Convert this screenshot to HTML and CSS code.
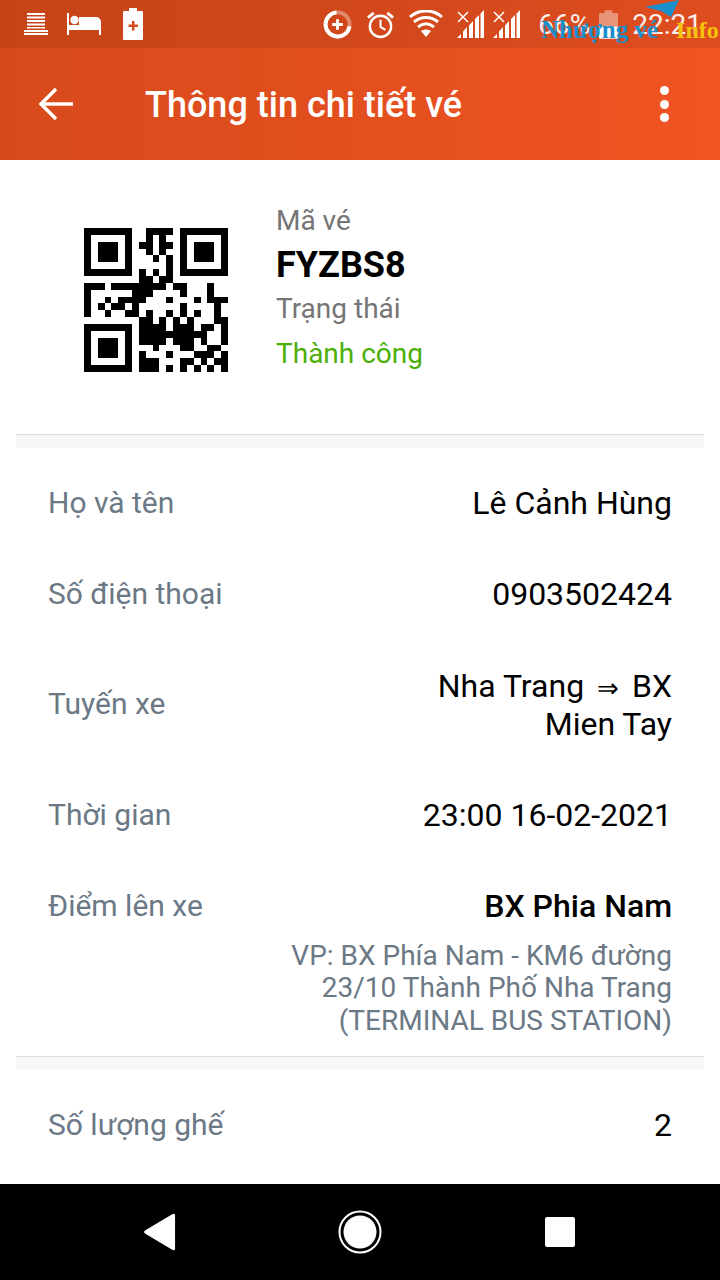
FILE: index.html
```html
<!DOCTYPE html>
<html>
<head>
<title>Thông tin chi tiết vé</title>
<meta charset="utf-8">
<link rel="stylesheet" href="styles.css">
</head>
<body>

<div class="screen">

  <div class="appbar">
    <div class="statusbar">
      <div class="status-left">
        <svg width="24" height="22" viewBox="0 0 24 22" fill="#fff"><path d="M3 0h18v2H3zM3 3.500h18v2H3zM3 7h18v2H3zM3 10.500h18v2H3zM3 14h18v1.500H3zM0 17h24v2H0zM0 20h24v2H0z"/></svg>
        <svg width="34" height="22" viewBox="0 0 34 22" fill="#fff"><path d="M0 0h2v12h10V4h17a5 5 0 0 1 5 5v13h-2v-5H2v5H0z"/><circle cx="7.500" cy="7" r="4.200"/></svg>
        <svg class="batt-plus" width="20" height="32" viewBox="0 0 20 32"><path fill="#fff" d="M6 0h8v3h5a1 1 0 0 1 1 1v27a1 1 0 0 1-1 1H1a1 1 0 0 1-1-1V4a1 1 0 0 1 1-1h5z"/><path fill="#d84b1c" d="M9 13h2.500v3.500H15V19h-3.500v3.500H9V19H5.500v-2.500H9z"/></svg>
      </div>
      <div class="status-right">
        <svg width="29" height="29" viewBox="0 0 30 30" fill="none"><circle cx="15" cy="15" r="12.500" stroke="#fff" stroke-opacity=".35" stroke-width="4"/><path d="M27.500 17A12.500 12.500 0 1 1 14 2.500" stroke="#fff" stroke-width="4"/><path d="M13.500 9.500h3v4h4v3h-4v4h-3v-4h-4v-3h4z" fill="#fff"/></svg>
        <svg width="29" height="29" viewBox="0 0 30 30" fill="none" stroke="#fff"><circle cx="15" cy="17" r="11" stroke-width="2.500"/><path d="M15 10v7.500l5 3" stroke-width="2.200"/><path d="M2 8l6-5M28 8l-6-5" stroke-width="3"/></svg>
        <svg width="34" height="28" viewBox="0 0 34 28" fill="none" stroke="#fff" stroke-width="3"><path d="M1 7C10-1 24-1 33 7M5 12c7-6 17-6 24 0M9 17c5-4 11-4 16 0"/><path d="M12 21c3-2 7-2 10 0l-5 6z" fill="#fff" stroke="none"/></svg>
        <svg width="27" height="28" viewBox="0 0 27 28" fill="#fff"><path d="M0 28L4 24V28zM6 28V21.500L10 17V28zM12 28V15.500L16 11V28zM18 28V9L22 5V28zM23.500 28V3.500L27 0V28z"/><path d="M1 2l10 10M11 2L1 12" stroke="#fff" stroke-width="1.500"/></svg>
        <svg class="sig-two" width="27" height="28" viewBox="0 0 27 28" fill="#fff"><path d="M0 28L4 24V28zM6 28V21.500L10 17V28zM12 28V15.500L16 11V28zM18 28V9L22 5V28zM23.500 28V3.500L27 0V28z"/><path d="M1 2l10 10M11 2L1 12" stroke="#fff" stroke-width="1.500"/></svg>
        <span class="battery-pct">66%</span>
        <svg class="batt" width="19" height="29" viewBox="0 0 20 30"><path fill="#fff" fill-opacity=".4" d="M6 0h8v3h5a1 1 0 0 1 1 1v13H0V4a1 1 0 0 1 1-1h5z"/><path fill="#fff" d="M0 17h20v12a1 1 0 0 1-1 1H1a1 1 0 0 1-1-1z"/></svg>
        <span class="clock">22:21</span>
      </div>
    </div>
    <div class="toolbar">
      <svg class="back" width="36" height="36" viewBox="0 0 36 36" fill="none" stroke="#fff" stroke-width="3.500"><path d="M35 18H4M18 3L3 18l15 15"/></svg>
      <h1>Thông tin chi tiết vé</h1>
      <div class="more"><i></i><i></i><i></i></div>
    </div>
  </div>

  <div class="content">
    <div class="ticket">
      <svg class="qr" width="144" height="144" viewBox="0 0 21 21" fill="none" stroke="#000" stroke-width="1" shape-rendering="crispEdges">
        <!-- finders -->
        <path d="M0 .5h7M0 6.500h7M.5 1v5M6.500 1v5M2 2.500h3M2 3.500h3M2 4.500h3M14 .5h7M14 6.500h7M14.500 1v5M20.500 1v5M16 2.500h3M16 3.500h3M16 4.500h3M0 14.500h7M0 20.500h7M.5 15v5M6.500 15v5M2 16.500h3M2 17.500h3M2 18.500h3"/>
        <!-- data, one run per row -->
        <path d="M9 .5h4M9 1.500h1M11 1.500h1M8 2.500h2M11 2.500h2M9 3.500h1M11 3.500h1M10 4.500h1M12 4.500h1M12 5.500h1M8 6.500h1M10 6.500h1M12 6.500h1M8 7.500h2M11 7.500h2"/>
        <path d="M0 8.500h3M4 8.500h8M13 8.500h2M18 8.500h1M0 9.500h1M7 9.500h3M14 9.500h1M18 9.500h1M0 10.500h1M3 10.500h1M5 10.500h4M12 10.500h1M16 10.500h1M18 10.500h3M0 11.500h1M2 11.500h1M4 11.500h2M7 11.500h1M14 11.500h1M19 11.500h1M0 12.500h1M3 12.500h1M6 12.500h2M9 12.500h1M12 12.500h1M14 12.500h1M16 12.500h1M19 12.500h1"/>
        <path d="M8 13.500h2M11 13.500h1M13 13.500h1M15 13.500h1M19 13.500h2M8 14.500h4M13 14.500h3M17 14.500h2M20 14.500h1M8 15.500h7M15 15.500h3M20 15.500h1M8 16.500h4M13 16.500h3M17 16.500h1M20 16.500h1M10 17.500h1M14 17.500h2M18 17.500h2M8 18.500h1M12 18.500h1M16 18.500h3M20 18.500h1M8 19.500h3M14 19.500h2M17 19.500h1M19 19.500h2M8 20.500h3M12 20.500h1M14 20.500h1M16 20.500h1M18 20.500h1M20 20.500h1"/>
      </svg>
      <div class="ticket-info">
        <div class="muted">Mã vé</div>
        <div class="code">FYZBS8</div>
        <div class="muted">Trạng thái</div>
        <div class="success">Thành công</div>
      </div>
    </div>

    <div class="band"></div>

    <div class="section">
      <div class="row">
        <div class="label">Họ và tên</div>
        <div class="value">Lê Cảnh Hùng</div>
      </div>
      <div class="row">
        <div class="label">Số điện thoại</div>
        <div class="value">0903502424</div>
      </div>
      <div class="row">
        <div class="label">Tuyến xe</div>
        <div class="value route">Nha Trang <span class="arrow">⇒</span> BX Mien Tay</div>
      </div>
      <div class="row">
        <div class="label">Thời gian</div>
        <div class="value">23:00 16-02-2021</div>
      </div>
      <div class="row pickup">
        <div class="label">Điểm lên xe</div>
        <div class="pickup-info">
          <div class="value strong">BX Phia Nam</div>
          <div class="address">VP: BX Phía Nam - KM6 đường 23/10 Thành Phố Nha Trang (TERMINAL BUS STATION)</div>
        </div>
      </div>
    </div>

    <div class="band"></div>

    <div class="section last">
      <div class="row">
        <div class="label">Số lượng ghế</div>
        <div class="value">2</div>
      </div>
    </div>
  </div>

  <div class="navbar">
    <div class="nav-item">
      <svg width="32" height="38" viewBox="0 0 34 40" fill="#fff"><path d="M32 .5a1.500 1.500 0 0 1 1 1.500v36a1.500 1.500 0 0 1-2.500 1L1 21.500a2 2 0 0 1 0-3L30.500 1z"/></svg>
    </div>
    <div class="nav-item">
      <svg width="44" height="44" viewBox="0 0 44 44"><circle cx="22" cy="22" r="20.500" fill="none" stroke="#fff" stroke-width="2"/><circle cx="22" cy="22" r="16.500" fill="#fff"/></svg>
    </div>
    <div class="nav-item">
      <div class="nav-square"></div>
    </div>
  </div>

  <div class="watermark">
    <svg class="plane" width="36" height="17" viewBox="0 0 36 17" fill="#1b8fcb"><path d="M0 7L34 0 26 17 16 11z"/></svg>
    <span class="wm-blue">Nhượng vé</span><span class="wm-yellow">Info</span>
  </div>

</div>

</body>
</html>
```

FILE: styles.css
```css
* {
  box-sizing: border-box;
}

body {
  margin: 0;
  background: #fff;
  font-family: Roboto, "Noto Sans", sans-serif;
}

.screen {
  position: relative;
  display: flex;
  flex-direction: column;
  height: 1280px;
  overflow: hidden;
}

/* App bar */

.appbar {
  flex: none;
  height: 160px;
  background: linear-gradient(90deg, #d64a1b, #f15422);
}

.statusbar {
  display: flex;
  justify-content: space-between;
  align-items: center;
  height: 48px;
  padding: 0 18px 0 24px;
  background: rgba(0, 0, 0, 0.08);
}

.status-left {
  display: flex;
  align-items: center;
  gap: 19px;
}

.batt-plus {
  margin-left: 3px;
}

.status-right {
  display: flex;
  align-items: center;
  gap: 14px;
  color: #fff;
  font-size: 28px;
}

.sig-two {
  margin-left: -5px;
}

.battery-pct {
  margin-left: 4px;
  opacity: 0.9;
}

.batt {
  margin-left: -5px;
}

.clock {
  margin-left: 0;
  opacity: 0.9;
}

.toolbar {
  display: flex;
  align-items: center;
  height: 112px;
  padding: 0 51px 0 38px;
}

.toolbar h1 {
  flex: 1;
  margin: 2px 0 0 71px;
  color: #fff;
  font-size: 36px;
  font-weight: 500;
}

.more {
  display: flex;
  flex-direction: column;
  gap: 4.500px;
}

.more i {
  display: block;
  width: 9px;
  height: 9px;
  border-radius: 50%;
  background: #fff;
}

/* Content */

.content {
  flex: 1;
  overflow: hidden;
  padding: 0 16px;
}

.ticket {
  display: flex;
  align-items: flex-start;
  height: 274px;
  padding: 39px 0 0 68px;
}

.qr {
  flex: none;
  margin-top: 29px;
}

.ticket-info {
  margin-left: 48px;
  font-size: 28px;
  line-height: 44px;
}

.muted {
  color: #757575;
}

.code {
  color: #000;
  font-size: 36px;
  font-weight: 700;
}

.success {
  margin-top: 1px;
  color: #4caf08;
}

.band {
  height: 14px;
  border-top: 1px solid #dedede;
  background: #f7f7f7;
}

.section {
  padding: 9px 32px 0;
}

.section.last {
  padding-top: 9px;
}

.row {
  display: flex;
  justify-content: space-between;
  align-items: center;
  padding: 26.500px 0;
  font-size: 30px;
  line-height: 38px;
}

.label {
  color: #6b7885;
}

.value {
  color: #000;
  font-size: 32px;
  text-align: right;
}

.route {
  max-width: 260px;
  margin-top: 1px;
}

.arrow {
  margin: 0 5px;
  font-size: 26px;
  line-height: 1;
}

.pickup {
  align-items: flex-start;
  padding-bottom: 19px;
}

.strong {
  font-weight: 500;
}

.address {
  max-width: 385px;
  margin: 15px 0 0 auto;
  color: #6b7885;
  font-size: 28px;
  line-height: 32.500px;
  text-align: right;
}

/* Nav bar */

.navbar {
  flex: none;
  display: flex;
  justify-content: center;
  align-items: center;
  height: 96px;
  background: #000;
}

.nav-item {
  display: flex;
  justify-content: center;
  width: 200px;
}

.nav-square {
  width: 30px;
  height: 30px;
  border-radius: 2px;
  background: #fff;
}

/* Watermark over the status bar */

.watermark {
  position: absolute;
  top: 16px;
  left: 541px;
  font-family: "Liberation Serif", serif;
  font-size: 25px;
  white-space: nowrap;
}

.plane {
  position: absolute;
  top: -16px;
  left: 104px;
}

.wm-blue {
  color: #1b8fcb;
  font-weight: 700;
}

.wm-yellow {
  margin-left: 18px;
  color: #f4c20d;
  font-size: 24px;
  font-weight: 700;
}
```
